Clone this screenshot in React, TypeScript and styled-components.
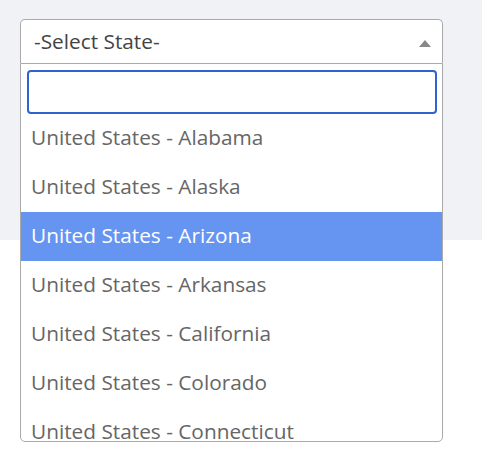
import React from 'react';
import styled, { createGlobalStyle } from 'styled-components';

const GlobalStyle = createGlobalStyle`
    html, body {
        margin: 0;
        padding: 0;
        background: #ffffff;
    }
    body {
        font-family: 'Open Sans', 'Noto Sans', sans-serif;
    }
`;

const Page = styled.div`
    width: 482px;
    height: 464px;
    overflow: hidden;
    background: #ffffff;
`;

const Band = styled.div`
    height: 240px;
    background: #f1f2f6;
    padding: 19px 39px 0 20px;
    box-sizing: border-box;
`;

const SelectWrap = styled.div`
    position: relative;
    width: 423px;
`;

const Selection = styled.div`
    height: 44px;
    box-sizing: border-box;
    display: flex;
    align-items: center;
    justify-content: space-between;
    padding: 0 11px 0 13px;
    background: #ffffff;
    border: 1px solid #aaaaaa;
    border-bottom: none;
    border-radius: 5px 5px 0 0;
`;

const Placeholder = styled.span`
    font-size: 20.8px;
    color: #444444;
    line-height: 1;
`;

const Arrow = styled.span`
    width: 0;
    height: 0;
    border-left: 6px solid transparent;
    border-right: 6px solid transparent;
    border-bottom: 7px solid #888888;
    margin-top: 3px;
`;

const Dropdown = styled.div`
    position: absolute;
    top: 44px;
    left: 0;
    right: 0;
    height: 379px;
    box-sizing: border-box;
    background: #ffffff;
    border: 1px solid #aaaaaa;
    border-radius: 0 0 5px 5px;
    overflow: hidden;
`;

const SearchBox = styled.div`
    padding: 6px 5px 0 6px;
`;

const SearchInput = styled.input`
    display: block;
    width: 100%;
    height: 44px;
    box-sizing: border-box;
    border: 2px solid #2f63d0;
    border-radius: 4px;
    outline: none;
    font-family: inherit;
    font-size: 20px;
    padding: 0 8px;
`;

const Options = styled.ul`
    list-style: none;
    margin: 0;
    padding: 0;
`;

const Option = styled.li<{ $active?: boolean }>`
    height: 49px;
    box-sizing: border-box;
    padding: 0 10px 4px;
    display: flex;
    align-items: center;
    font-size: 20.8px;
    color: ${p => (p.$active ? '#ffffff' : '#666666')};
    background: ${p => (p.$active ? '#6694f1' : 'transparent')};
    white-space: nowrap;
`;

const states = [
    'Alabama',
    'Alaska',
    'Arizona',
    'Arkansas',
    'California',
    'Colorado',
    'Connecticut',
];

export default function App() {
    return (
        <Page>
            <GlobalStyle />
            <Band>
                <SelectWrap>
                    <Selection>
                        <Placeholder>-Select State-</Placeholder>
                        <Arrow />
                    </Selection>
                    <Dropdown>
                        <SearchBox>
                            <SearchInput type="search" />
                        </SearchBox>
                        <Options>
                            {states.map(s => (
                                <Option key={s} $active={s === 'Arizona'}>
                                    United States - {s}
                                </Option>
                            ))}
                        </Options>
                    </Dropdown>
                </SelectWrap>
            </Band>
        </Page>
    );
}
